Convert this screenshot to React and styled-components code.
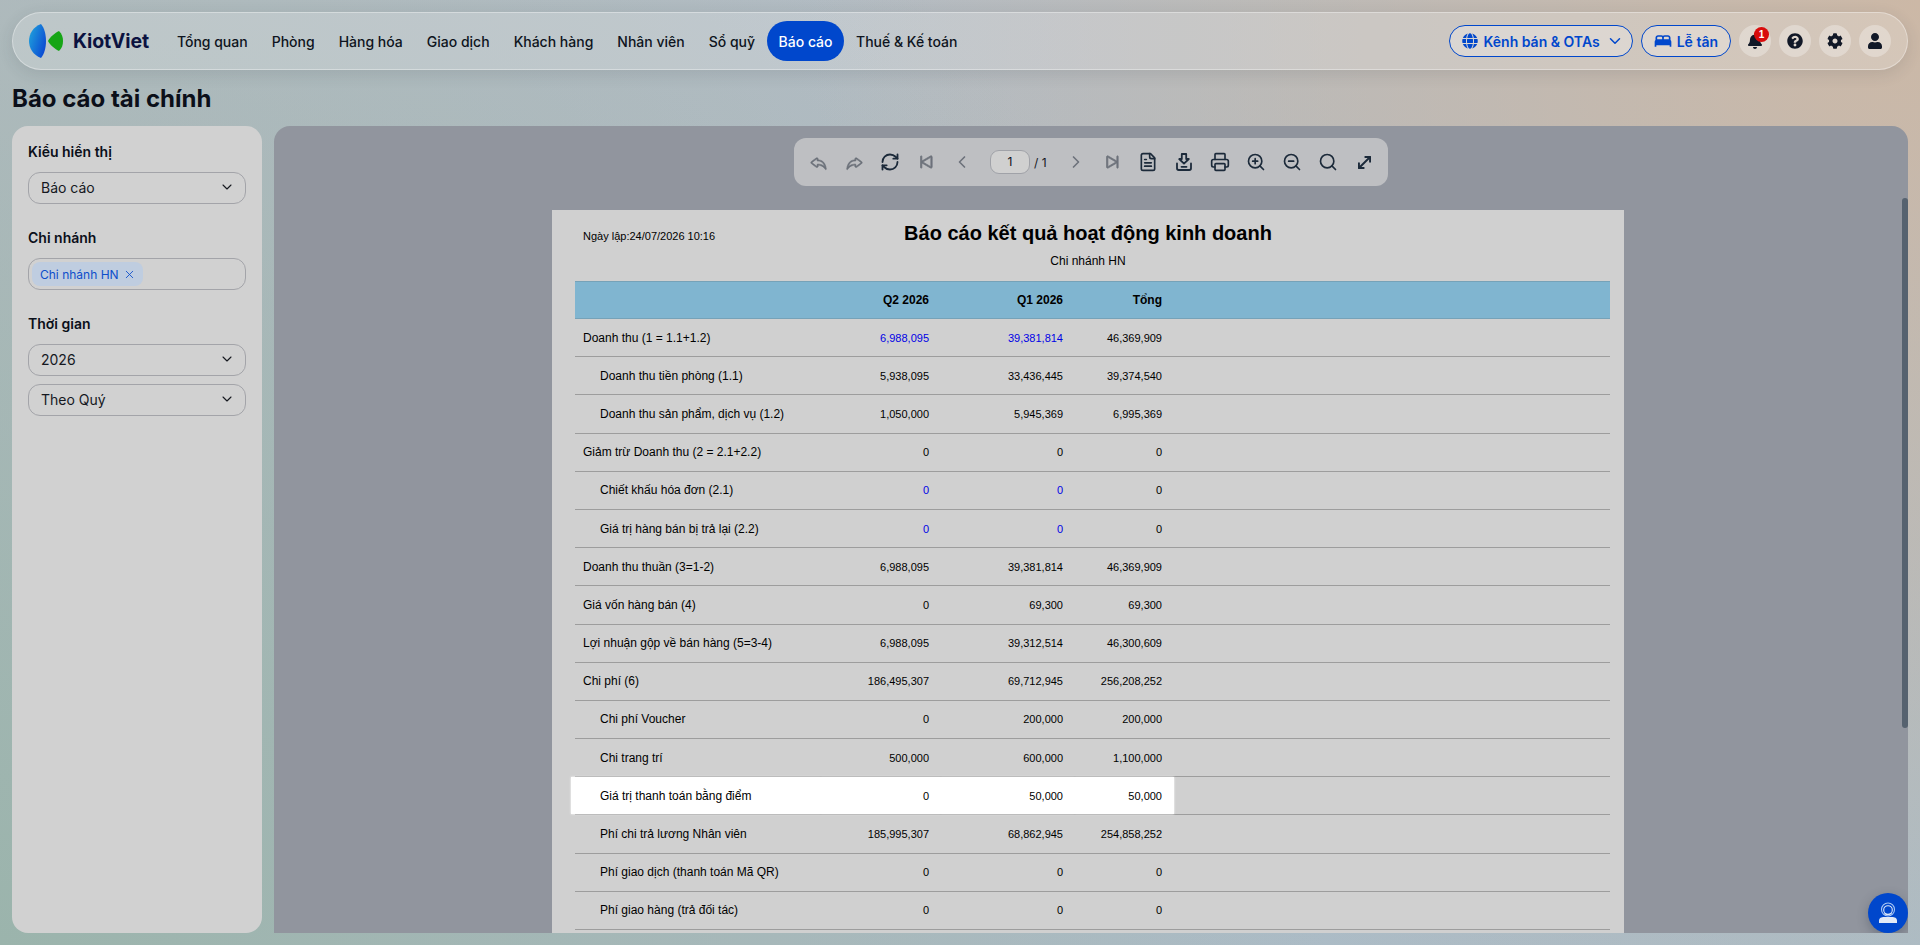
import React from "react";
import styled, { createGlobalStyle } from "styled-components";
import { FaGlobe, FaBell, FaQuestionCircle, FaCog, FaUser } from "react-icons/fa";
import { MdBed } from "react-icons/md";
import { BsReply, BsSkipStart, BsSkipEnd } from "react-icons/bs";
import { LuChevronDown, LuChevronLeft, LuChevronRight, LuRefreshCw, LuFileText, LuPrinter, LuZoomIn, LuZoomOut, LuSearch, LuMoveDiagonal, LuX } from "react-icons/lu";

const Global = createGlobalStyle`
  html, body { margin: 0; padding: 0; height: 100%; overflow: hidden; }
  body { font-family: Inter, "Noto Sans", sans-serif; color: #0b0f19; }
  * { box-sizing: border-box; }
`;

const Shell = styled.div`
  position: relative;
  height: 945px;
  display: flex;
  flex-direction: column;
  padding: 12px;
  overflow: hidden;
  background:
    radial-gradient(circle at 100% 0, #ccb8a6 0, rgba(204,184,166,0) 52%),
    radial-gradient(circle at 0 100%, #9bb4ac 0, rgba(155,180,172,0) 62%),
    linear-gradient(135deg, #b6bcc3 0%, #afbbc4 60%, #a8bcc8 100%);
`;

const NavBar = styled.header`
  flex: none;
  height: 58px;
  display: flex;
  align-items: center;
  padding: 0 16px;
  border-radius: 29px;
  background: rgba(255, 255, 255, 0.2);
  border: 1px solid rgba(255, 255, 255, 0.35);
  box-shadow: 0 4px 16px rgba(40, 50, 60, 0.12);
`;

const Brand = styled.div`
  display: flex;
  align-items: center;
  gap: 10px;
  margin-right: 16px;
`;

const BrandName = styled.span`
  font-size: 19.5px;
  font-weight: 700;
  color: #0b1240;
  letter-spacing: -0.15px;
`;

const NavItem = styled.a`
  display: flex;
  align-items: center;
  height: 40px;
  padding: 0 ${(p) => (p.$active ? "11.5px" : "12px")};
  border-radius: 20px;
  font-size: 14px;
  font-weight: 500;
  white-space: nowrap;
  color: ${(p) => (p.$active ? "#fff" : "#0e1420")};
  background: ${(p) => (p.$active ? "#0047cc" : "transparent")};
`;

const NavRight = styled.div`
  margin-left: auto;
  display: flex;
  align-items: center;
  gap: 8px;
`;

const OutlineButton = styled.button`
  height: 32px;
  display: flex;
  align-items: center;
  gap: ${(p) => (p.$compact ? "4px" : "6px")};
  padding: ${(p) => (p.$compact ? "0 12px 0 11px" : "0 8px 0 12px")};
  border-radius: 16px;
  border: 1px solid #0047cc;
  background: rgba(255, 255, 255, 0.28);
  color: #0047cc;
  font: 600 14px Inter, sans-serif;
  white-space: nowrap;
`;

const RoundButton = styled.button`
  position: relative;
  width: 32px;
  height: 32px;
  padding: 0;
  display: flex;
  align-items: center;
  justify-content: center;
  border: 0;
  border-radius: 50%;
  background: rgba(255, 255, 255, 0.3);
  color: #111827;
`;

const Badge = styled.span`
  position: absolute;
  top: 2px;
  right: 2px;
  width: 15px;
  height: 15px;
  border-radius: 50%;
  background: #d80c0c;
  color: #fff;
  font-size: 10px;
  font-weight: 600;
  line-height: 15px;
  text-align: center;
`;

const PageTitle = styled.h1`
  flex: none;
  height: 56px;
  margin: 0;
  display: flex;
  align-items: center;
  font-size: 24px;
  font-weight: 700;
  color: #0b0f19;
`;

const Content = styled.div`
  flex: 1;
  min-height: 0;
  display: grid;
  grid-template-columns: 250px 1fr;
  gap: 12px;
`;

const Sidebar = styled.aside`
  background: #d1d1d1;
  border-radius: 16px;
  padding: 16px;
`;

const FieldLabel = styled.div`
  height: 20px;
  line-height: 20px;
  font-size: 14px;
  font-weight: 600;
  margin-bottom: 10px;
`;

const FieldGroup = styled.div`
  display: flex;
  flex-direction: column;
  gap: 8px;
  margin-bottom: 24px;
`;

const Select = styled.div`
  height: 32px;
  display: flex;
  align-items: center;
  justify-content: space-between;
  padding: 0 10px 2px 12px;
  border: 1px solid #a3a4a9;
  border-radius: 12px;
  font-size: 14px;
  color: #15181f;
`;

const ChipBox = styled(Select)`
  justify-content: flex-start;
  padding: 0 3px;
`;

const Chip = styled.span`
  height: 24px;
  display: flex;
  align-items: center;
  gap: 4px;
  padding: 0 7px 0 8px;
  border-radius: 8px;
  background: #bfcde0;
  color: #0d4ecb;
  font-size: 12px;
`;

const Main = styled.main`
  position: relative;
  min-width: 0;
  background: #91959e;
  border-radius: 16px 16px 0 0;
  overflow: hidden;
  display: flex;
  flex-direction: column;
`;

const ToolbarRow = styled.div`
  flex: none;
  display: flex;
  justify-content: center;
  padding-top: 12px;
`;

const Toolbar = styled.div`
  height: 48px;
  width: 594px;
  display: flex;
  align-items: center;
  padding: 0 6px;
  border-radius: 12px;
  background: #bebfc2;
`;

const Tool = styled.span`
  flex: none;
  width: 36px;
  display: flex;
  align-items: center;
  justify-content: center;
  color: ${(p) => (p.$off ? "#6d727b" : "#1c2a3a")};
`;

const PageInput = styled.span`
  flex: none;
  width: 40px;
  height: 24px;
  margin-left: 10px;
  border: 1px solid #a0a2a8;
  border-radius: 9px;
  background: #d0d0d0;
  font-size: 12px;
  line-height: 22px;
  text-align: center;
`;

const PageCount = styled.span`
  flex: none;
  width: 28px;
  padding-left: 4px;
  font-size: 12px;
  color: #15181f;
`;

const ScrollArea = styled.div`
  flex: 1;
  min-height: 0;
  margin-top: 24px;
  padding-right: 6px;
  display: flex;
  justify-content: center;
  overflow: hidden;
`;

const Sheet = styled.div`
  width: 1072px;
  flex: none;
  background: #d0d0d0;
  padding: 0 14px 0 23px;
  font-family: "Liberation Sans", Arial, sans-serif;
  color: #000;
`;

const SheetHead = styled.div`
  height: 71px;
  position: relative;
  text-align: center;
`;

const Created = styled.div`
  position: absolute;
  left: 8px;
  top: 20px;
  font-size: 11px;
  line-height: 13px;
`;

const ReportTitle = styled.div`
  padding-top: 11px;
  margin-left: -9px;
  font-size: 20px;
  line-height: 24px;
  font-weight: 700;
`;

const ReportBranch = styled.div`
  margin-top: 9px;
  margin-left: -9px;
  font-size: 12px;
  line-height: 14px;
`;

const Row = styled.div`
  display: grid;
  grid-template-columns: 246px 120px 134px 99px 1fr;
  height: 38.2px;
  align-items: stretch;
  border-bottom: 1px solid #9d9d9d;
  font-size: 11px;
`;

const HeadRow = styled(Row)`
  height: 38px;
  background: #80b5d0;
  border-top: 1px solid #76a2b8;
  border-bottom: 1px solid #76a2b8;
  font-weight: 700;
  font-size: 12px;
`;

const LabelCell = styled.div`
  display: flex;
  align-items: center;
  padding-left: ${(p) => (p.$indent ? "25px" : "8px")};
  white-space: nowrap;
  font-size: 12px;
  background: ${(p) => (p.$hi ? "#fff" : "transparent")};
  margin-left: ${(p) => (p.$hi ? "-4px" : "0")};
  ${(p) => p.$hi && "padding-left: 29px; box-shadow: 0 0 2px #fff;"}
`;

const NumCell = styled.div`
  display: flex;
  align-items: center;
  justify-content: flex-end;
  padding-right: 12px;
  color: ${(p) => (p.$link ? "#0000e6" : "inherit")};
  background: ${(p) => (p.$hi ? "#fff" : "transparent")};
  ${(p) => p.$hi && "box-shadow: 0 0 2px #fff;"}
`;

const ThumbBar = styled.div`
  position: absolute;
  right: 0;
  top: 72px;
  bottom: 205px;
  width: 6px;
  border-radius: 3px;
  background: #56626f;
`;

const Fab = styled.button`
  position: absolute;
  right: 0;
  bottom: 0;
  width: 40px;
  height: 40px;
  padding: 0;
  border: 0;
  border-radius: 50%;
  display: flex;
  align-items: center;
  justify-content: center;
  background: #0047cc;
  box-shadow: 0 4px 12px rgba(30, 40, 60, 0.3);
`;

const rows = [
  ["Doanh thu (1 = 1.1+1.2)", "6,988,095", "39,381,814", "46,369,909", { link: 1 }],
  ["Doanh thu tiền phòng (1.1)", "5,938,095", "33,436,445", "39,374,540", { indent: 1 }],
  ["Doanh thu sản phẩm, dịch vụ (1.2)", "1,050,000", "5,945,369", "6,995,369", { indent: 1 }],
  ["Giảm trừ Doanh thu (2 = 2.1+2.2)", "0", "0", "0", {}],
  ["Chiết khấu hóa đơn (2.1)", "0", "0", "0", { indent: 1, link: 1 }],
  ["Giá trị hàng bán bị trả lại (2.2)", "0", "0", "0", { indent: 1, link: 1 }],
  ["Doanh thu thuần (3=1-2)", "6,988,095", "39,381,814", "46,369,909", {}],
  ["Giá vốn hàng bán (4)", "0", "69,300", "69,300", {}],
  ["Lợi nhuận gộp về bán hàng (5=3-4)", "6,988,095", "39,312,514", "46,300,609", {}],
  ["Chi phí (6)", "186,495,307", "69,712,945", "256,208,252", {}],
  ["Chi phí Voucher", "0", "200,000", "200,000", { indent: 1 }],
  ["Chi trang trí", "500,000", "600,000", "1,100,000", { indent: 1 }],
  ["Giá trị thanh toán bằng điểm", "0", "50,000", "50,000", { indent: 1, hi: 1 }],
  ["Phí chi trả lương Nhân viên", "185,995,307", "68,862,945", "254,858,252", { indent: 1 }],
  ["Phí giao dịch (thanh toán Mã QR)", "0", "0", "0", { indent: 1 }],
  ["Phí giao hàng (trả đối tác)", "0", "0", "0", { indent: 1 }],
];

const navItems = ["Tổng quan", "Phòng", "Hàng hóa", "Giao dịch", "Khách hàng", "Nhân viên", "Sổ quỹ", "Báo cáo", "Thuế & Kế toán"];

const Logo = () => (
  <svg width="34" height="34" viewBox="0 0 34 34" aria-hidden="true">
    <defs>
      <linearGradient id="lens" x1="0" y1="0.2" x2="1" y2="0.8">
        <stop offset="0" stopColor="#1fa0dc" />
        <stop offset="1" stopColor="#0a45d2" />
      </linearGradient>
    </defs>
    <path d="M12 0C4 3 0 10 0 17s4 14 12 17c3.500-4 5-11 5-17S15.500 4 12 0Z" fill="url(#lens)" />
    <path d="M19 17C21 13 26 9 30 7c3 3 4 6 4 10s-1 7-4 10C26 25 21 21 19 17Z" fill="#16a516" />
  </svg>
);

const DownloadIcon = () => (
  <svg width="20" height="20" viewBox="0 0 20 20" fill="none" stroke="currentColor" strokeWidth="1.8" strokeLinejoin="round" strokeLinecap="round">
    <path d="M7.800 2h4.400v5h2.600L10 11.600 5.200 7h2.600Z" />
    <path d="M3 11.500v4.800A1.700 1.700 0 0 0 4.700 18h10.600a1.700 1.700 0 0 0 1.700-1.700v-4.800" />
    <path d="M7.500 14.800h5" />
  </svg>
);

const AgentIcon = () => (
  <svg width="22" height="22" viewBox="0 0 22 22" fill="none">
    <circle cx="11" cy="7.500" r="6.500" stroke="#a9c8f5" strokeWidth="1.100" />
    <circle cx="11" cy="8" r="4.300" stroke="#dfe9f8" strokeWidth="1.100" />
    <path d="M7.500 11.500c2 1.300 5 1.300 7-.2" stroke="#dfe9f8" strokeWidth="1.100" />
    <path d="M2 21v-2.500c0-2.500 2.500-3.500 5-3.500h8c2.500 0 5 1 5 3.500V21Z" fill="#e3eaf6" />
  </svg>
);

export default function App() {
  return (
    <Shell>
      <Global />
      <NavBar>
        <Brand>
          <Logo />
          <BrandName>KiotViet</BrandName>
        </Brand>
        {navItems.map((n) => (
          <NavItem key={n} $active={n === "Báo cáo"}>{n}</NavItem>
        ))}
        <NavRight>
          <OutlineButton><FaGlobe size={16} />Kênh bán &amp; OTAs<LuChevronDown size={18} /></OutlineButton>
          <OutlineButton $compact><MdBed size={20} />Lễ tân</OutlineButton>
          <RoundButton><FaBell size={16} /><Badge>1</Badge></RoundButton>
          <RoundButton><FaQuestionCircle size={16} /></RoundButton>
          <RoundButton><FaCog size={16} /></RoundButton>
          <RoundButton><FaUser size={16} /></RoundButton>
        </NavRight>
      </NavBar>

      <PageTitle>Báo cáo tài chính</PageTitle>

      <Content>
        <Sidebar>
          <FieldLabel>Kiểu hiển thị</FieldLabel>
          <FieldGroup>
            <Select>Báo cáo<LuChevronDown size={16} strokeWidth={1.6} /></Select>
          </FieldGroup>
          <FieldLabel>Chi nhánh</FieldLabel>
          <FieldGroup>
            <ChipBox><Chip>Chi nhánh HN<LuX size={13} strokeWidth={1.6} /></Chip></ChipBox>
          </FieldGroup>
          <FieldLabel>Thời gian</FieldLabel>
          <FieldGroup>
            <Select>2026<LuChevronDown size={16} strokeWidth={1.6} /></Select>
            <Select>Theo Quý<LuChevronDown size={16} strokeWidth={1.6} /></Select>
          </FieldGroup>
        </Sidebar>

        <Main>
          <ToolbarRow>
            <Toolbar>
              <Tool $off><BsReply size={19} strokeWidth={0.5} stroke="currentColor" /></Tool>
              <Tool $off><BsReply size={19} strokeWidth={0.5} stroke="currentColor" style={{ transform: "scaleX(-1)" }} /></Tool>
              <Tool><LuRefreshCw size={20} strokeWidth={2.2} /></Tool>
              <Tool $off><BsSkipStart size={22} strokeWidth={0.5} stroke="currentColor" /></Tool>
              <Tool $off><LuChevronLeft size={20} /></Tool>
              <PageInput>1</PageInput>
              <PageCount>/ 1</PageCount>
              <Tool $off><LuChevronRight size={20} /></Tool>
              <Tool $off><BsSkipEnd size={22} strokeWidth={0.5} stroke="currentColor" /></Tool>
              <Tool><LuFileText size={20} /></Tool>
              <Tool><DownloadIcon /></Tool>
              <Tool><LuPrinter size={20} /></Tool>
              <Tool><LuZoomIn size={20} /></Tool>
              <Tool><LuZoomOut size={20} /></Tool>
              <Tool><LuSearch size={20} /></Tool>
              <Tool><LuMoveDiagonal size={19} strokeWidth={2.4} /></Tool>
            </Toolbar>
          </ToolbarRow>
          <ScrollArea>
            <Sheet>
              <SheetHead>
                <Created>Ngày lập:24/07/2026 10:16</Created>
                <ReportTitle>Báo cáo kết quả hoạt động kinh doanh</ReportTitle>
                <ReportBranch>Chi nhánh HN</ReportBranch>
              </SheetHead>
              <HeadRow>
                <LabelCell />
                <NumCell>Q2 2026</NumCell>
                <NumCell>Q1 2026</NumCell>
                <NumCell>Tổng</NumCell>
              </HeadRow>
              {rows.map(([label, a, b, c, o]) => (
                <Row key={label}>
                  <LabelCell $indent={o.indent} $hi={o.hi}>{label}</LabelCell>
                  <NumCell $link={o.link} $hi={o.hi}>{a}</NumCell>
                  <NumCell $link={o.link} $hi={o.hi}>{b}</NumCell>
                  <NumCell $hi={o.hi}>{c}</NumCell>
                </Row>
              ))}
            </Sheet>
          </ScrollArea>
          <ThumbBar />
          <Fab><AgentIcon /></Fab>
        </Main>
      </Content>
    </Shell>
  );
}
